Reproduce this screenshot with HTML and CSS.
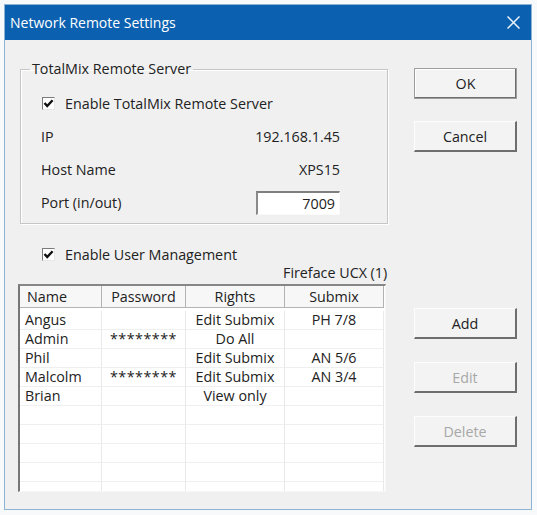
FILE: index.html
```html
<!DOCTYPE html>
<html lang="en">
<head>
<meta charset="utf-8">
<title>Network Remote Settings</title>
<link rel="stylesheet" href="styles.css">
</head>
<body>
<div class="window">
  <div class="titlebar">
    <span class="title">Network Remote Settings</span>
    <span class="close"><svg width="13" height="13" viewBox="0 0 13 13"><path d="M0.5 0.5L12.5 12.5M12.5 0.5L0.5 12.5" stroke="#eaf2fb" stroke-width="1.5" fill="none"/></svg></span>
  </div>
  <div class="content">
    <div class="main">
      <fieldset class="group">
        <legend>TotalMix Remote Server</legend>
        <div class="gbody">
          <div class="row"><span class="check"><svg width="11" height="11" viewBox="0 0 11 11"><path d="M1.5 5L4.2 8L9.6 2.2" stroke="#111" stroke-width="2.4" fill="none"/></svg></span>Enable TotalMix Remote Server</div>
          <div class="row field"><span>IP</span><span>192.168.1.45</span></div>
          <div class="row field"><span>Host Name</span><span>XPS15</span></div>
          <div class="row field"><span>Port (in/out)</span><span class="input">7009</span></div>
        </div>
      </fieldset>
      <div class="um"><span class="check"><svg width="11" height="11" viewBox="0 0 11 11"><path d="M1.5 5L4.2 8L9.6 2.2" stroke="#111" stroke-width="2.4" fill="none"/></svg></span>Enable User Management</div>
      <div class="device">Fireface UCX (1)</div>
      <div class="list">
        <div class="lhead"><div>Name</div><div>Password</div><div>Rights</div><div>Submix</div></div>
        <div class="lbody">
          <div class="lrow"><div>Angus</div><div></div><div>Edit Submix</div><div>PH 7/8</div></div>
          <div class="lrow"><div>Admin</div><div class="pw">********</div><div>Do All</div><div></div></div>
          <div class="lrow"><div>Phil</div><div></div><div>Edit Submix</div><div>AN 5/6</div></div>
          <div class="lrow"><div>Malcolm</div><div class="pw">********</div><div>Edit Submix</div><div>AN 3/4</div></div>
          <div class="lrow"><div>Brian</div><div></div><div>View only</div><div></div></div>
          <div class="lrow"><div></div><div></div><div></div><div></div></div>
          <div class="lrow"><div></div><div></div><div></div><div></div></div>
          <div class="lrow"><div></div><div></div><div></div><div></div></div>
          <div class="lrow"><div></div><div></div><div></div><div></div></div>
          <div class="lrow"><div></div><div></div><div></div><div></div></div>
        </div>
      </div>
    </div>
    <div class="side">
      <div class="btn default">OK</div>
      <div class="btn">Cancel</div>
      <div class="btn add">Add</div>
      <div class="btn disabled">Edit</div>
      <div class="btn disabled">Delete</div>
    </div>
  </div>
</div>
</body>
</html>
```
FILE: styles.css
```css
* { box-sizing: border-box; }
html, body { margin: 0; }
body {
  background: #f8f9fa;
  padding: 4px 0 0 4px;
  font-family: "Open Sans", "Noto Sans", sans-serif;
  font-size: 14.3px;
  color: #222;
}
.window {
  width: 528px;
  height: 506px;
  border: 1px solid #8db3d7;
  background: #f0f0f0;
  display: flex;
  flex-direction: column;
}
.titlebar {
  flex: none;
  height: 35px;
  background: #0b61b0;
  color: #fff;
  display: flex;
  align-items: center;
  justify-content: space-between;
  padding: 0 11px 0 5px;
}
.title { line-height: 18px; font-size: 14px; }
.close { display: flex; }
.content {
  display: flex;
  padding: 20px 0 0 13px;
}
.main { width: 374px; }
.group {
  margin: 0 0 0 2px;
  padding: 0;
  width: 368px;
  border: 1px solid #c6c6c6;
  box-shadow: inset 1px 1px 0 #fff, 1px 1px 0 #fff;
}
.group legend {
  margin-left: 9px;
  padding: 0 2px;
  line-height: 18px;
}
.gbody { padding: 9px 47px 4px 20px; }
.row {
  height: 33px;
  display: flex;
  align-items: center;
}
.field { justify-content: space-between; }
.check {
  flex: none;
  width: 13px;
  height: 13px;
  margin: 0 10px 0 1px;
  background: #fff;
  border-style: solid;
  border-width: 1px;
  border-color: #7c7c7c #e6e6e6 #e6e6e6 #7c7c7c;
  display: flex;
  align-items: center;
  justify-content: center;
}
.input {
  width: 84px;
  height: 24px;
  background: #fff;
  border-style: solid;
  border-width: 2px 1px 1px 2px;
  border-color: #7f7f7f #fafafa #fafafa #8a8a8a;
  text-align: right;
  padding-right: 4px;
  line-height: 21px;
}
.um {
  margin-top: 20px;
  height: 20px;
  display: flex;
  align-items: center;
  padding-left: 23px;
}
.device {
  height: 17px;
  line-height: 17px;
  padding-left: 265px;
  white-space: nowrap;
}
.list {
  margin-top: 3px;
  width: 368px;
  height: 208px;
  background: #fff;
  border-style: solid;
  border-width: 2px 1px 1px 2px;
  border-color: #868686 #f6f6f6 #f6f6f6 #777;
  overflow: hidden;
}
.lhead, .lrow {
  display: grid;
  grid-template-columns: 82px 84px 99px 99px;
  width: 364px;
}
.lhead {
  height: 22px;
  background: #f7f7f7;
  border-bottom: 1px solid #b4b4b4;
}
.lhead div {
  border-right: 1px solid #b2b2b2;
  text-align: center;
  line-height: 22px;
}
.lhead div:first-child { text-align: left; padding-left: 7px; }
.lbody { padding-top: 3px; }
.lrow { height: 19px; }
.lrow div {
  border-right: 1px solid #e9e9e9;
  border-bottom: 1px solid #efefef;
  line-height: 18px;
  text-align: center;
  white-space: nowrap;
}
.lrow div:first-child { text-align: left; padding-left: 5px; }
.pw { letter-spacing: 0.5px; }
.side {
  margin-left: 22px;
  padding-top: 8px;
  display: flex;
  flex-direction: column;
  gap: 22px;
}
.btn {
  width: 103px;
  height: 31px;
  background: #f3f3f3;
  border-style: solid;
  border-width: 1px 2px 2px 1px;
  border-color: #fdfdfd #6e6e6e #6e6e6e #fdfdfd;
  display: flex;
  align-items: center;
  justify-content: center;
}
.btn.default {
  border-width: 1px;
  border-color: #9d9d9d;
  box-shadow: inset -1px -1px 0 #6e6e6e, inset 1px 1px 0 #fff;
}
.btn.add { margin-top: 134px; }
.btn.disabled { color: #a8a8a8; margin-top: 1px; }
```
